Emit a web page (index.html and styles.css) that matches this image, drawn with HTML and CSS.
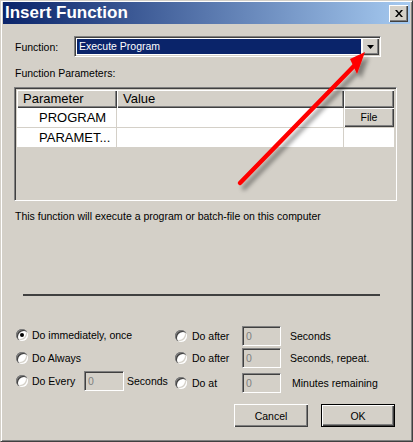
FILE: index.html
```html
<!DOCTYPE html>
<html lang="en">
<head>
  <meta charset="UTF-8">
  <meta name="viewport" content="width=device-width,initial-scale=1.0">
  <title>Insert Function</title>
  <link rel="stylesheet" href="styles.css">
</head>
<body>
  <div class="window">
    <!-- title bar -->
    <div class="titlebar">
      <span class="title">Insert Function</span>
      <span class="close-btn">
        <svg width="8" height="7" viewBox="0 0 8 7"><path d="M0 0h2l2 2.5L6 0h2L5 3.5 8 7H6L4 4.5 2 7H0l3-3.5z" fill="#000"/></svg>
      </span>
    </div>

    <div class="content">
      <div class="field-row">
        <span class="field-label">Function:</span>
        <div class="combo">
          <div class="combo-value">Execute Program</div>
          <div class="combo-btn">
            <svg width="7" height="4" viewBox="0 0 7 4"><path d="M0 0h7L3.5 4z" fill="#000"/></svg>
          </div>
        </div>
      </div>

      <div class="section-label">Function Parameters:</div>

      <div class="param-grid">
        <div class="grid-head">Parameter</div>
        <div class="grid-head">Value</div>
        <div class="grid-head"></div>
        <div class="grid-cell name">PROGRAM</div>
        <div class="grid-cell"></div>
        <div class="grid-cell last"><span class="file-btn">File</span></div>
        <div class="grid-cell name">PARAMET...</div>
        <div class="grid-cell"></div>
        <div class="grid-cell last"></div>
      </div>

      <p class="description">This function will execute a program or batch-file on this computer</p>

      <div class="separator"></div>

      <!-- when to run -->
      <div class="options">
        <div class="opt-col left">
          <div class="opt"><span class="radio checked"></span><span>Do immediately, once</span></div>
          <div class="opt"><span class="radio"></span><span>Do Always</span></div>
          <div class="opt"><span class="radio"></span><span class="opt-label short">Do Every</span><span class="num">0</span><span class="unit">Seconds</span></div>
        </div>
        <div class="opt-col right">
          <div class="opt"><span class="radio"></span><span class="opt-label">Do after</span><span class="num">0</span><span class="unit">Seconds</span></div>
          <div class="opt"><span class="radio"></span><span class="opt-label">Do after</span><span class="num">0</span><span class="unit">Seconds, repeat.</span></div>
          <div class="opt"><span class="radio"></span><span class="opt-label">Do at</span><span class="num">0</span><span class="unit wide">Minutes remaining</span></div>
        </div>
      </div>

      <div class="actions">
        <button class="btn">Cancel</button>
        <button class="btn default">OK</button>
      </div>
    </div>

    <!-- red pointer drawn over the dialog -->
    <svg class="pointer-arrow" width="413" height="442" viewBox="0 0 413 442">
      <defs>
        <filter id="shade" x="-20%" y="-20%" width="140%" height="140%">
          <feDropShadow dx="4" dy="5" stdDeviation="2" flood-color="#000" flood-opacity="0.4"/>
        </filter>
      </defs>
      <g filter="url(#shade)">
        <line x1="240" y1="183" x2="354" y2="66" stroke="#ff0000" stroke-width="4.5" stroke-linecap="round"/>
        <path d="M365 52L350 59L357 74z" fill="#ff0000"/>
      </g>
    </svg>
  </div>
</body>
</html>
```

FILE: styles.css
```css
* {
  box-sizing: border-box;
}

body {
  margin: 0;
  background: #d4d0c8;
  font-family: 'Liberation Sans', Arial, sans-serif;
  font-size: 10.5px;
  color: #000;
}

.window {
  position: relative;
  width: 413px;
  height: 442px;
  background: #d4d0c8;
  border: 1px solid;
  border-color: #d4d0c8 #404040 #404040 #d4d0c8;
  box-shadow: inset 1px 1px #fff, inset -1px -1px #808080;
  padding: 1px 2px 2px;
}

.titlebar {
  height: 22px;
  display: flex;
  align-items: center;
  justify-content: space-between;
  padding: 0 2px;
  background: linear-gradient(to right, #0a246a, #a6caf0);
}
.title {
  color: #fff;
  font-weight: bold;
  font-size: 17px;
}
.close-btn {
  width: 19px;
  height: 17px;
  display: flex;
  align-items: center;
  justify-content: center;
  background: #d4d0c8;
  box-shadow: inset 1px 1px #fff, inset -1px -1px #404040, inset -2px -2px #808080;
}

.content {
  padding: 12px 15px 0 12px;
}

.field-row {
  display: flex;
  align-items: center;
  height: 21px;
}
.field-label {
  width: 59px;
}
.combo {
  width: 307px;
  height: 21px;
  display: flex;
  padding: 1px;
  background: #fff;
  border: 1px solid;
  border-color: #808080 #fff #fff #808080;
  box-shadow: inset 1px 1px #404040, inset -1px -1px #d4d0c8;
}
.combo-value {
  flex: 1;
  margin: 1px;
  padding-left: 2px;
  background: #0a246a;
  color: #fff;
  line-height: 15px;
}
.combo-btn {
  width: 17px;
  display: flex;
  align-items: center;
  justify-content: center;
  background: #d4d0c8;
  box-shadow: inset 1px 1px #fff, inset -1px -1px #404040, inset -2px -2px #808080;
}

.section-label {
  margin-top: 10px;
  line-height: 13px;
}

.param-grid {
  margin: 7px 0 0 -1px;
  width: 383px;
  height: 114px;
  display: grid;
  grid-template-columns: 100px 227px 50px;
  grid-template-rows: 18px 20px 20px;
  align-content: start;
  padding: 2px;
  border: 1px solid;
  border-color: #808080 #fff #fff #808080;
  box-shadow: inset 1px 1px #404040, inset -1px -1px #d4d0c8;
  font-size: 13px;
}
.grid-head {
  padding-left: 6px;
  line-height: 17px;
  background: #d4d0c8;
  box-shadow: inset 1px 1px #fff, inset -1px -1px #404040, inset -2px -2px #808080;
}
.grid-cell {
  background: #fff;
  border-right: 1px solid #d4d0c8;
  border-bottom: 1px solid #d4d0c8;
  line-height: 19px;
}
.grid-cell.name {
  padding-left: 22px;
}
.grid-cell.last {
  border-right: 0;
}
.file-btn {
  display: block;
  height: 100%;
  text-align: center;
  font-size: 10.5px;
  background: #d4d0c8;
  box-shadow: inset 1px 1px #fff, inset -1px -1px #404040, inset -2px -2px #808080;
}

.description {
  margin: 9px 0 0;
  line-height: 13px;
}

.separator {
  margin: 71px 0 0 8px;
  width: 357px;
  height: 2px;
  background: #404040;
}

.options {
  display: flex;
  margin-top: 27px;
}
.opt-col.left {
  width: 160px;
}
.opt-col.right {
  padding-top: 3px;
}
.opt {
  display: flex;
  align-items: center;
  height: 23px;
  white-space: nowrap;
}
.opt-col.right .opt {
  height: 20px;
}
.opt-col.right .opt + .opt {
  margin-top: 2px;
}
.opt-col.right .opt:last-child {
  margin-top: 5px;
}

.radio {
  flex: none;
  width: 12px;
  height: 12px;
  margin: 0 4px 0 1px;
  border-radius: 50%;
  background: #fff;
  display: flex;
  align-items: center;
  justify-content: center;
  box-shadow: inset 1px 1px #808080, inset 2px 2px #404040, inset -1px -1px #fff, inset -2px -2px #d4d0c8;
}
.opt-col.right .radio {
  margin: 0 5px 0 0;
}
.radio.checked::after {
  content: '';
  width: 4px;
  height: 4px;
  border-radius: 50%;
  background: #000;
}

.opt-label {
  width: 50px;
}
.opt-label.short {
  width: 52px;
}
.num {
  width: 39px;
  height: 20px;
  padding-left: 3px;
  line-height: 18px;
  color: #808080;
  background: #d4d0c8;
  border: 1px solid;
  border-color: #808080 #fff #fff #808080;
  box-shadow: inset 1px 1px #404040, inset -1px -1px #d4d0c8;
}
.opt-col.left .num {
  width: 40px;
}
.unit {
  margin-left: 9px;
}
.opt-col.left .unit {
  margin-left: 3px;
}
.unit.wide {
  margin-left: 11px;
}

.actions {
  display: flex;
  justify-content: flex-end;
  gap: 13px;
  margin-top: 11px;
}
.btn {
  width: 74px;
  height: 23px;
  padding: 0;
  border: 0;
  font-family: inherit;
  font-size: 10.5px;
  color: #000;
  background: #d4d0c8;
  box-shadow: inset 1px 1px #fff, inset -1px -1px #404040, inset -2px -2px #808080;
}
.btn.default {
  border: 1px solid #000;
}

.pointer-arrow {
  position: absolute;
  top: -1px;
  left: -1px;
  pointer-events: none;
}
```
